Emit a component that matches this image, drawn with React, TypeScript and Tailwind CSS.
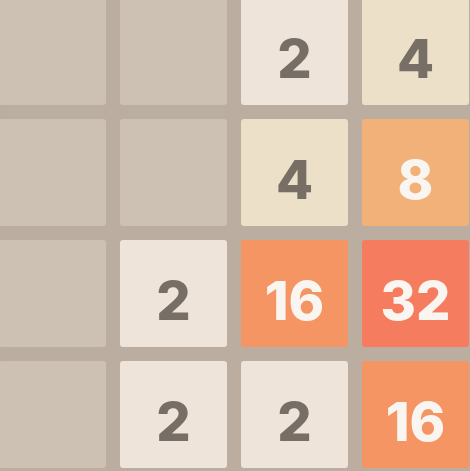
import React from 'react';

const tileStyles: Record<number, string> = {
  0: 'bg-[#cdc1b4]',
  2: 'bg-[#eee4da] text-[#776e65]',
  4: 'bg-[#ede0c8] text-[#776e65]',
  8: 'bg-[#f2b179] text-[#f9f6f2]',
  16: 'bg-[#f59563] text-[#f9f6f2]',
  32: 'bg-[#f67c5f] text-[#f9f6f2]',
};

const board = [
  [0, 0, 2, 4],
  [0, 0, 4, 8],
  [0, 2, 16, 32],
  [0, 2, 2, 16],
];

const Tile: React.FC<{ value: number }> = ({ value }) => (
  <div
    className={`w-[107px] h-[107px] rounded-[3px] flex items-center justify-center pt-[14px] text-[54px] font-extrabold leading-none ${tileStyles[value]}`}
  >
    {value > 0 ? value : ''}
  </div>
);

export default function App() {
  return (
    <div className="w-[470px] h-[471px] overflow-hidden bg-[#bbada0] font-['Inter',sans-serif]">
      <div className="-ml-[1px] -mt-[2px] grid grid-cols-[repeat(4,107px)] gap-[14px]">
        {board.flat().map((v, i) => (
          <Tile key={i} value={v} />
        ))}
      </div>
    </div>
  );
}
